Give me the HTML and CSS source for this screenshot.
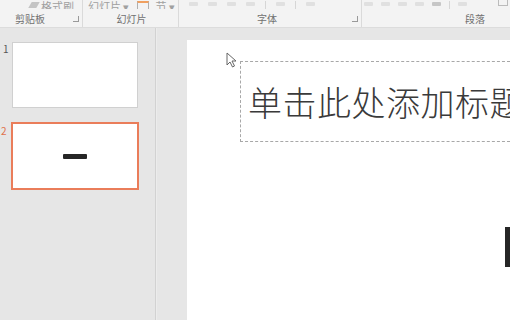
FILE: index.html
```html
<!DOCTYPE html>
<html lang="zh">
<head>
<meta charset="utf-8">
<link rel="stylesheet" href="styles.css">
</head>
<body>
<div class="app">
  <div class="ribbon">
    <div class="group g1">
      <div class="top"><span class="brush"></span><span class="ttext">格式刷</span></div>
      <div class="label">剪贴板</div>
      <span class="launch"></span>
    </div>
    <div class="group g2">
      <div class="top"><span class="ttext">幻灯片 ▾</span><span class="secicon"></span><span class="ttext">节 ▾</span></div>
      <div class="label">幻灯片</div>
    </div>
    <div class="group g3">
      <div class="top"><span class="ic"></span><span class="ic"></span><span class="ic"></span><span class="ic"></span><span class="vsep"></span><span class="ic"></span><span class="vsep"></span><span class="ic"></span></div>
      <div class="label">字体</div>
      <span class="launch"></span>
    </div>
    <div class="group g4">
      <div class="top"><span class="ic"></span><span class="ic"></span><span class="ic"></span><span class="ic"></span><span class="ic dark"></span><span class="vsep"></span><span class="ic"></span></div>
      <div class="label">段落</div>
      <span class="corner"></span>
    </div>
  </div>
  <div class="main">
    <div class="sidebar">
      <div class="thumbrow">
        <span class="num">1</span>
        <div class="thumb"></div>
      </div>
      <div class="thumbrow sel">
        <span class="num">2</span>
        <div class="thumb"><span class="dash"></span></div>
      </div>
    </div>
    <div class="workspace">
      <div class="slide">
        <svg class="cursor" width="12" height="16" viewBox="0 0 12 16"><path d="M1 1 L1 13 L4 10 L6.5 15 L8.5 14 L6 9 L10 9 Z" fill="#fff" stroke="#666" stroke-width="1"/></svg>
        <div class="title"><span class="ttl">单击此处添加标题</span></div>
        <div class="bar"></div>
      </div>
    </div>
  </div>
</div>
</body>
</html>
```

FILE: styles.css
```css
html, body {
  margin: 0;
  padding: 0;
  width: 510px;
  height: 320px;
  overflow: hidden;
  background: #e6e6e6;
  font-family: "Noto Sans CJK SC", "Noto Sans", sans-serif;
}
.app {
  display: flex;
  flex-direction: column;
  width: 510px;
  height: 320px;
}
.ribbon {
  height: 27px;
  flex: none;
  display: flex;
  background: #f3f3f3;
  border-bottom: 1px solid #dcdcdc;
}
.group {
  position: relative;
  display: flex;
  flex-direction: column;
  border-right: 1px solid #dadada;
  box-sizing: border-box;
}
.g1 { width: 83px; }
.g2 { width: 96px; }
.g3 { width: 183px; }
.g4 { flex: 1; border-right: none; }
.top {
  height: 9px;
  flex: none;
  display: flex;
  align-items: flex-end;
  overflow: hidden;
  color: #a0a0a0;
  font-size: 11px;
  line-height: 11px;
  gap: 3px;
}
.ttext {
  display: block;
  transform: translateY(3px);
  white-space: nowrap;
}
.g1 .top { padding-left: 30px; }
.g2 .top { padding-left: 5px; gap: 6px; }
.g3 .top { padding-left: 10px; gap: 10px; }
.g4 .top { padding-left: 2px; gap: 8px; }
.brush {
  width: 8px;
  height: 6px;
  background: #c4c4c4;
  transform: skewX(-30deg);
  margin-bottom: 1px;
}
.secicon {
  width: 10px;
  height: 6px;
  border: 1px solid #b0b0b0;
  border-top: 2px solid #f0a060;
  border-bottom: none;
  margin-left: 2px;
}
.ic {
  width: 9px;
  height: 4px;
  background: #e0e0e0;
  margin-bottom: 3px;
  border-radius: 1px;
}
.ic.dark { background: #c6c6c6; }
.vsep {
  width: 1px;
  height: 8px;
  background: #d6d6d6;
}
.label {
  flex: 1;
  display: flex;
  align-items: flex-end;
  justify-content: center;
  font-size: 10px;
  line-height: 12px;
  color: #707070;
  padding-bottom: 2px;
}
.g1 .label { justify-content: flex-start; padding-left: 15px; }
.g2 .label { padding-left: 2px; }
.g3 .label { padding-right: 6px; }
.g4 .label { justify-content: flex-end; padding-right: 25px; }
.launch {
  position: absolute;
  right: 3px;
  bottom: 5px;
  width: 5px;
  height: 5px;
  border-right: 1px solid #999;
  border-bottom: 1px solid #999;
}
.corner {
  position: absolute;
  right: 2px;
  top: 0;
  width: 8px;
  height: 5px;
  border: 1px solid #bbb;
  border-top: none;
}
.main {
  flex: 1;
  display: flex;
  min-height: 0;
}
.sidebar {
  width: 155px;
  flex: none;
  border-right: 1px solid #d2d2d2;
  padding-top: 14px;
  display: flex;
  flex-direction: column;
  gap: 14px;
}
.thumbrow {
  display: flex;
  align-items: flex-start;
}
.num {
  width: 12px;
  font-size: 10px;
  line-height: 10px;
  color: #555;
  padding-left: 3px;
  box-sizing: border-box;
  margin-top: 2px;
}
.thumb {
  width: 124px;
  height: 64px;
  background: #fff;
  border: 1px solid #d0d0d0;
  display: flex;
  align-items: center;
  justify-content: center;
}
.sel .num {
  color: #e0714b;
  padding-left: 1px;
  width: 11px;
  margin-top: 4px;
}
.sel .thumb {
  border: 2px solid #ea7d5a;
}
.dash {
  width: 24px;
  height: 5px;
  background: #262626;
  border-radius: 1px;
}
.workspace {
  flex: 1;
  min-width: 0;
  display: flex;
  padding: 12px 0 0 30px;
  border-left: 1px solid #ececec;
}
.slide {
  flex: 1;
  min-width: 0;
  background: #fff;
  position: relative;
  overflow: hidden;
  padding: 21px 0 0 53px;
}
.cursor {
  position: absolute;
  left: 39px;
  top: 12px;
}
.title {
  height: 79px;
  border: 1px dashed #a8a8a8;
  border-right: none;
  display: flex;
  align-items: center;
  padding-left: 7px;
  white-space: nowrap;
  overflow: hidden;
}
.ttl {
  font-size: 34px;
  font-weight: 300;
  color: #3a3a3a;
  letter-spacing: 0.5px;
}
.bar {
  position: absolute;
  right: 0;
  top: 187px;
  width: 5px;
  height: 40px;
  background: #262626;
}
```
